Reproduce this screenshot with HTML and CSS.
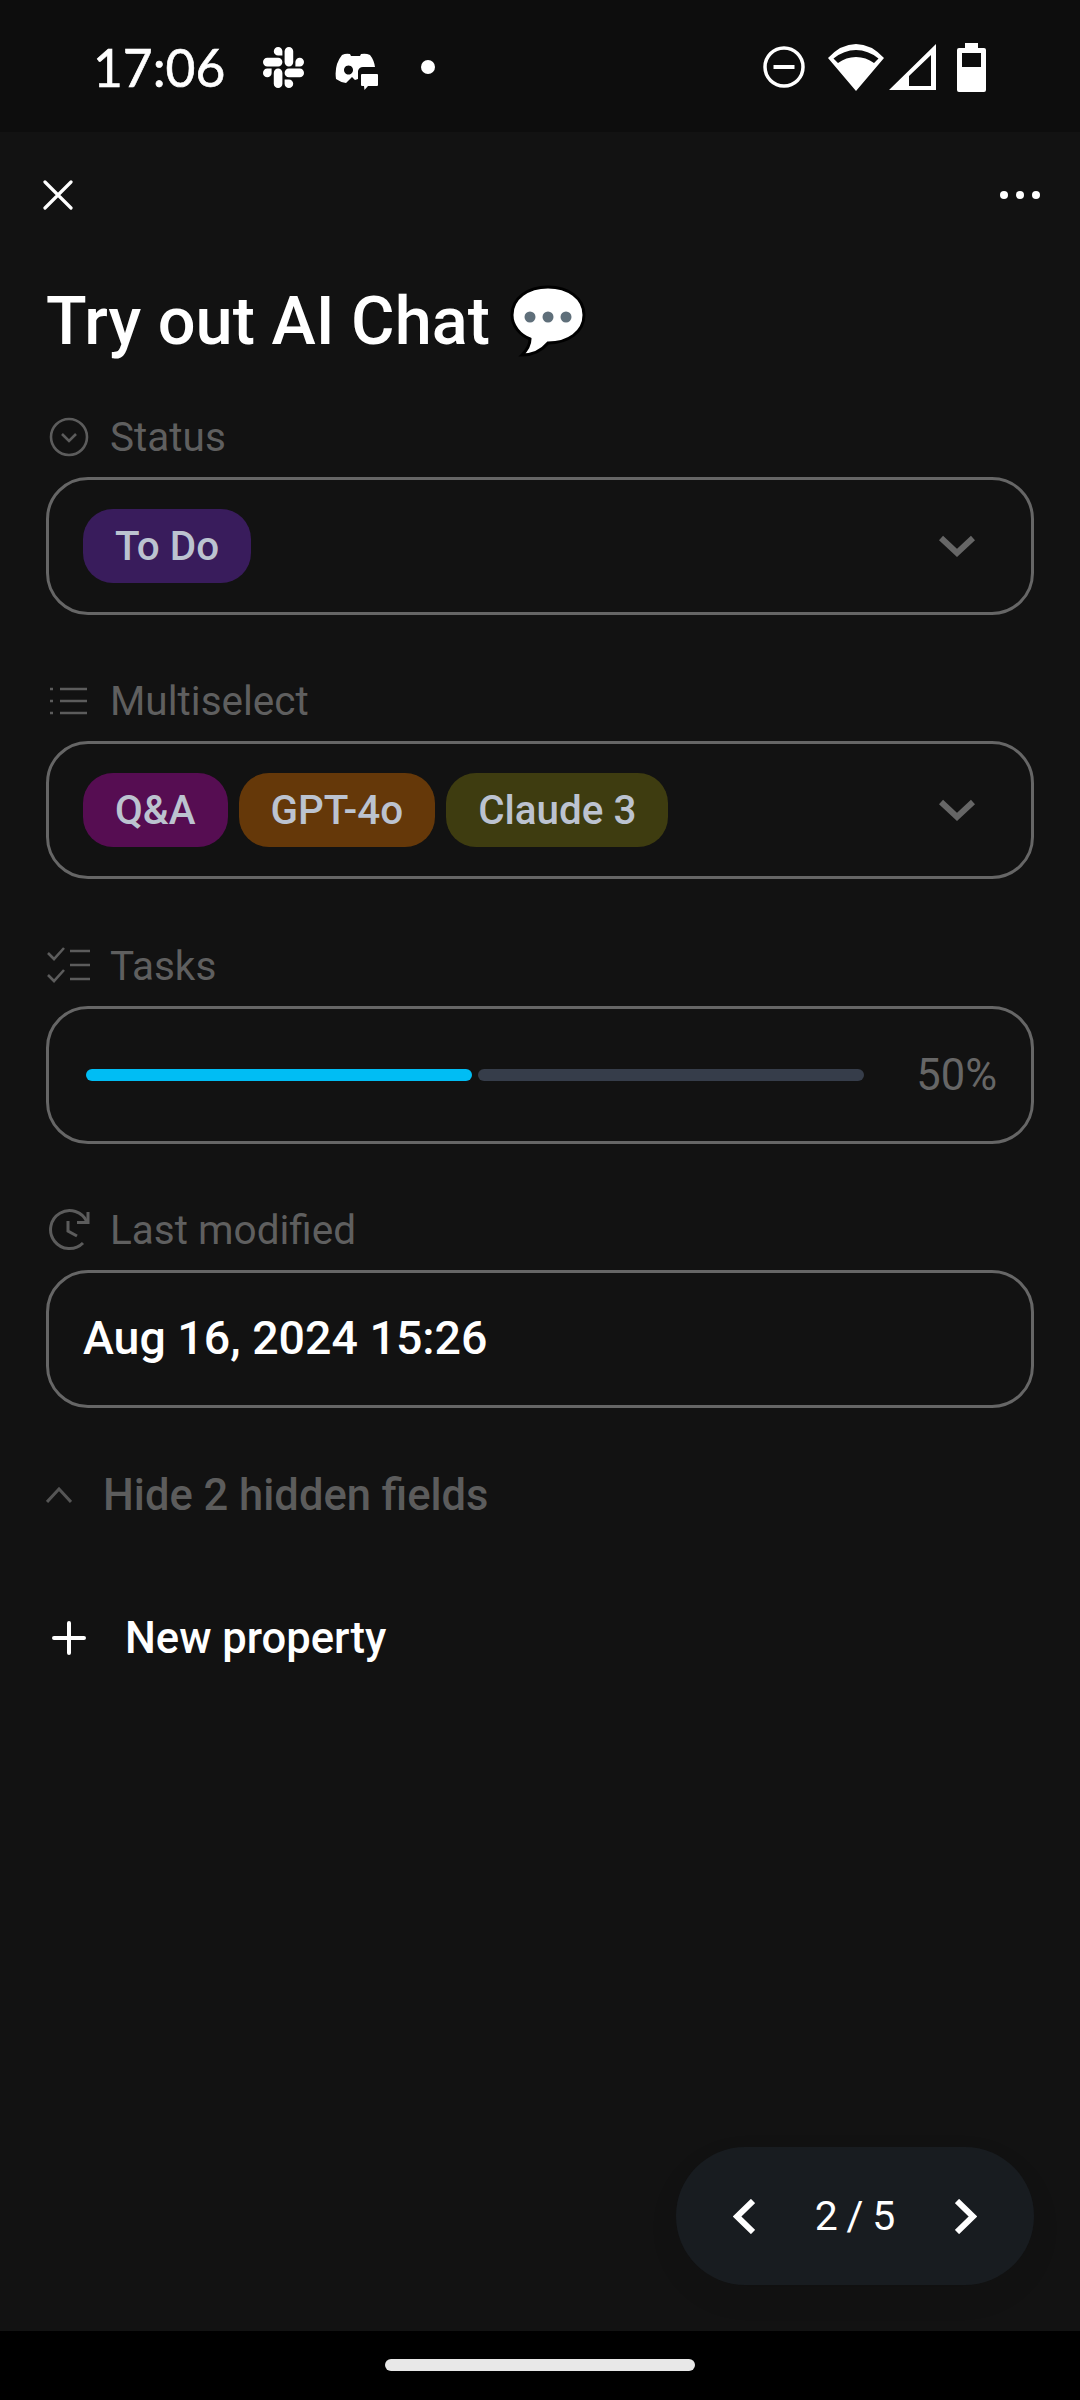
FILE: index.html
```html
<!DOCTYPE html>
<html lang="en">
  <head>
    <meta charset="UTF-8" />
    <meta name="viewport" content="width=device-width, initial-scale=1.0" />
    <title>Try out AI Chat</title>
    <link rel="stylesheet" href="styles.css">
  </head>
  <body>
    <header class="statusbar">
      <div class="status-left">
        <span class="clock">17:06</span>
        <svg class="ic-slack" viewBox="0 0 24 24" fill="#fff"><path d="M5.042 15.165a2.528 2.528 0 0 1-2.52 2.523A2.528 2.528 0 0 1 0 15.165a2.527 2.527 0 0 1 2.522-2.52h2.52v2.52zM6.313 15.165a2.527 2.527 0 0 1 2.521-2.52 2.527 2.527 0 0 1 2.521 2.52v6.313A2.528 2.528 0 0 1 8.834 24a2.528 2.528 0 0 1-2.521-2.522v-6.313zM8.834 5.042a2.528 2.528 0 0 1-2.521-2.52A2.528 2.528 0 0 1 8.834 0a2.528 2.528 0 0 1 2.521 2.522v2.52H8.834zM8.834 6.313a2.528 2.528 0 0 1 2.521 2.521 2.528 2.528 0 0 1-2.521 2.521H2.522A2.528 2.528 0 0 1 0 8.834a2.528 2.528 0 0 1 2.522-2.521h6.312zM18.956 8.834a2.528 2.528 0 0 1 2.522-2.521A2.528 2.528 0 0 1 24 8.834a2.528 2.528 0 0 1-2.522 2.521h-2.522V8.834zM17.688 8.834a2.528 2.528 0 0 1-2.523 2.521 2.527 2.527 0 0 1-2.52-2.521V2.522A2.527 2.527 0 0 1 15.165 0a2.528 2.528 0 0 1 2.523 2.522v6.312zM15.165 18.956a2.528 2.528 0 0 1 2.523 2.522A2.528 2.528 0 0 1 15.165 24a2.527 2.527 0 0 1-2.52-2.522v-2.522h2.52zM15.165 17.688a2.527 2.527 0 0 1-2.52-2.523 2.526 2.526 0 0 1 2.52-2.52h6.313A2.527 2.527 0 0 1 24 15.165a2.528 2.528 0 0 1-2.522 2.523h-6.313z"/></svg>
        <svg class="ic-discord" viewBox="0 0 44 37" fill="#fff">
          <path fill-rule="evenodd" d="M7 2Q11 0 15 1L16 3H25L26 1Q31 0 35 2Q39 7 40 14H28Q24 14 23 18V26L20 27L17 24L11 30Q5 29 1 26Q-1 12 7 2ZM13.5 12.5a4.5 4.5 0 1 0 .01 0Z"/>
          <path d="M27 21H42Q43 21 43 22V32Q43 33 42 33H33L29.5 37L29 33H27Q26 33 26 32V22Q26 21 27 21Z"/>
        </svg>
        <span class="notif-dot"></span>
      </div>
      <div class="status-right">
        <svg class="ic-dnd" viewBox="0 0 42 42" fill="none" stroke="#fff"><circle cx="21" cy="21" r="19" stroke-width="3.5"/><path d="M10.5 21H31.5" stroke-width="4"/></svg>
        <svg class="ic-wifi" viewBox="0 0 56 47" fill="#fff"><path fill-rule="evenodd" d="M28 47L0 14Q13 0 28 0Q43 0 56 14ZM5.5 14.5L10 19Q18 13 28 13Q38 13 46 19L50.5 14.5Q40 6 28 6Q16 6 5.5 14.5Z"/></svg>
        <svg class="ic-signal" viewBox="0 0 47 46" fill="#fff"><path fill-rule="evenodd" d="M47 0V46H0ZM42 11L20 32V42H42Z"/></svg>
        <svg class="ic-battery" viewBox="0 0 29 49" fill="#fff"><path fill-rule="evenodd" d="M8 0H21V5H27Q29 5 29 7V47Q29 49 27 49H2Q0 49 0 47V7Q0 5 2 5H8ZM5 10V24H24V10Z"/></svg>
      </div>
    </header>

    <main class="page">
      <div class="toolbar">
        <svg class="ic-close" viewBox="0 0 30 30" fill="none" stroke="#fff" stroke-width="3.2" stroke-linecap="round"><path d="M2 2L28 28M28 2L2 28"/></svg>
        <div class="more"><span></span><span></span><span></span></div>
      </div>

      <h1 class="title">
        Try out AI Chat
        <svg class="ic-balloon" viewBox="0 0 76 72"><path d="M38 2C18 2 2 13 2 30C2 41 10 50 20 54C20 60 17 65 12 70C24 70 33 64 38 58C58 58 74 47 74 30C74 13 58 2 38 2Z" fill="#fff" stroke="#000" stroke-width="3"/><circle cx="20" cy="32" r="5.5" fill="#5f6f7a"/><circle cx="38" cy="32" r="5.5" fill="#5f6f7a"/><circle cx="56" cy="32" r="5.5" fill="#5f6f7a"/></svg>
      </h1>

      <section class="field">
        <div class="field-label">
          <span class="label-icon"><svg viewBox="0 0 40 40" width="40" height="40" fill="none" stroke="#5c5c5c" stroke-width="2.6"><circle cx="20" cy="20" r="18"/><path d="M13 17L20 24L27 17"/></svg></span>
          Status
        </div>
        <div class="box">
          <span class="chip chip-purple">To Do</span>
          <svg class="ic-caret" viewBox="0 0 36 23" fill="none" stroke="#666" stroke-width="6"><path d="M2 3L18 18L34 3"/></svg>
        </div>
      </section>

      <section class="field">
        <div class="field-label">
          <span class="label-icon"><svg viewBox="0 0 40 40" width="40" height="40" fill="none" stroke="#5c5c5c" stroke-width="2.6"><path d="M11 8H38M11 20H38M11 32H38"/><path d="M1 8H4M1 20H4M1 32H4"/></svg></span>
          Multiselect
        </div>
        <div class="box">
          <span class="chip chip-magenta">Q&amp;A</span>
          <span class="chip chip-orange">GPT-4o</span>
          <span class="chip chip-olive">Claude 3</span>
          <svg class="ic-caret" viewBox="0 0 36 23" fill="none" stroke="#666" stroke-width="6"><path d="M2 3L18 18L34 3"/></svg>
        </div>
      </section>

      <section class="field">
        <div class="field-label">
          <span class="label-icon"><svg viewBox="0 0 44 40" width="44" height="40" fill="none" stroke="#5c5c5c" stroke-width="2.6"><path d="M23 5H43M23 19H43M23 33H43"/><path d="M1 7L7 13L17 2M1 29L7 35L17 24"/></svg></span>
          Tasks
        </div>
        <div class="box">
          <div class="progress">
            <span class="bar bar-done"></span>
            <span class="bar bar-rest"></span>
          </div>
          <span class="percent">50%</span>
        </div>
      </section>

      <section class="field">
        <div class="field-label">
          <span class="label-icon"><svg viewBox="0 0 44 44" width="44" height="44" fill="none" stroke="#5c5c5c" stroke-width="3"><path d="M40 14A19 19 0 1 0 36 35"/><path d="M41 4V14.500H30"/><path d="M21 13V23L30 28"/></svg></span>
          Last modified
        </div>
        <div class="box">
          <span class="date">Aug 16, 2024 15:26</span>
        </div>
      </section>

      <div class="hide-row">
        <svg class="ic-up" viewBox="0 0 26 16" fill="none" stroke="#555" stroke-width="3"><path d="M1 15L13 2L25 15"/></svg>
        Hide 2 hidden fields
      </div>

      <div class="new-row">
        <svg class="ic-plus" viewBox="0 0 34 34" fill="none" stroke="#fff" stroke-width="4" stroke-linecap="round"><path d="M17 2V32M2 17H32"/></svg>
        New property
      </div>

      <div class="pager">
        <svg class="ic-nav" viewBox="0 0 22 35" fill="none" stroke="#fff" stroke-width="6"><path d="M20 2L4 17.500L20 33"/></svg>
        <span class="pager-text">2 / 5</span>
        <svg class="ic-nav" viewBox="0 0 22 35" fill="none" stroke="#fff" stroke-width="6"><path d="M2 2L18 17.500L2 33"/></svg>
      </div>
    </main>

    <footer class="navbar">
      <span class="handle"></span>
    </footer>
  </body>
</html>
```

FILE: styles.css
```css
* {
  box-sizing: border-box;
}
body {
  margin: 0;
  width: 1080px;
  height: 2400px;
  display: flex;
  flex-direction: column;
  overflow: hidden;
  background-color: #121212;
  font-family: Roboto, "Liberation Sans", sans-serif;
  color: #fff;
}
svg {
  display: block;
  flex-shrink: 0;
}

/* status bar */
.statusbar {
  height: 132px;
  flex-shrink: 0;
  background-color: #0d0d0d;
  display: flex;
  justify-content: space-between;
  align-items: center;
  padding: 2px 94px 0 93px;
}
.status-left,
.status-right {
  display: flex;
  align-items: center;
}
.clock {
  font-family: Lato, sans-serif;
  font-size: 51.5px;
  line-height: 60px;
  width: 170px;
  white-space: nowrap;
  -webkit-text-stroke: 0.6px #fff;
}
.ic-slack {
  width: 41px;
  height: 41px;
  margin-right: 31px;
}
.ic-discord {
  width: 44px;
  height: 37px;
  margin-right: 42px;
  margin-top: 8px;
}
.notif-dot {
  width: 14px;
  height: 14px;
  border-radius: 50%;
  background-color: #fff;
}
.ic-dnd {
  width: 42px;
  height: 42px;
  margin-right: 23px;
}
.ic-wifi {
  width: 56px;
  height: 47px;
  margin-right: 5px;
}
.ic-signal {
  width: 47px;
  height: 46px;
  margin-right: 21px;
}
.ic-battery {
  width: 29px;
  height: 49px;
}

/* page */
.page {
  position: relative;
  flex: 1;
  padding: 0 46px;
}
.toolbar {
  height: 126px;
  display: flex;
  justify-content: space-between;
  align-items: center;
}
.ic-close {
  width: 30px;
  height: 30px;
  margin-left: -3px;
}
.more {
  display: flex;
  gap: 8px;
  margin-right: -6px;
}
.more span {
  width: 8px;
  height: 8px;
  border-radius: 50%;
  background-color: #fff;
}
.title {
  margin: 0;
  height: 157px;
  padding-top: 24px;
  display: flex;
  align-items: flex-start;
  gap: 20px;
  font-size: 66.7px;
  font-weight: 500;
  line-height: 78px;
}
.ic-balloon {
  width: 76px;
  height: 72px;
  margin-top: 3px;
}

/* property fields */
.field {
  margin-bottom: 64.33px;
}
.field-label {
  height: 44px;
  display: flex;
  align-items: center;
  gap: 18px;
  margin-bottom: 18px;
  font-size: 40.5px;
  color: #5f5f5f;
}
.label-icon {
  width: 46px;
  display: flex;
  justify-content: center;
}
.box {
  height: 138px;
  display: flex;
  align-items: center;
  gap: 11px;
  padding: 0 34px;
  border: 3px solid #666;
  border-radius: 42px;
}
.chip {
  height: 74px;
  padding: 1px 32px 0;
  display: flex;
  align-items: center;
  border-radius: 30px;
  font-size: 40.4px;
  font-weight: 500;
  color: #bcc3d0;
}
.chip-purple {
  background-color: #391c5c;
}
.chip-magenta {
  background-color: #560d52;
}
.chip-orange {
  background-color: #653809;
}
.chip-olive {
  background-color: #3e3c10;
}
.ic-caret {
  width: 36px;
  height: 23px;
  margin-left: auto;
  margin-right: 22px;
}
.progress {
  width: 778px;
  margin-left: 3px;
  display: flex;
  gap: 6px;
}
.bar {
  flex: 1;
  height: 12px;
  border-radius: 6px;
}
.bar-done {
  background-color: #00bdf4;
}
.bar-rest {
  background-color: #363d4a;
}
.percent {
  margin-left: auto;
  padding-top: 2px;
  font-size: 43.5px;
  color: #666;
}
.date {
  padding-bottom: 2px;
  font-size: 46.5px;
  font-weight: 500;
}

/* rows under the fields */
.hide-row,
.new-row {
  height: 60px;
  display: flex;
  align-items: center;
  font-size: 43.5px;
  font-weight: 500;
}
.hide-row {
  margin-top: -7px;
  color: #5c5c5c;
}
.ic-up {
  width: 26px;
  height: 16px;
  margin-right: 31px;
}
.new-row {
  margin-top: 83px;
}
.ic-plus {
  width: 34px;
  height: 34px;
  margin-left: 6px;
  margin-right: 39px;
}

/* floating pager */
.pager {
  position: absolute;
  right: 46px;
  bottom: 46px;
  width: 358px;
  height: 138px;
  padding: 0 57px;
  display: flex;
  justify-content: space-between;
  align-items: center;
  border-radius: 69px;
  background-color: #181c20;
  box-shadow: 0 12px 30px rgba(0, 0, 0, 0.08);
}
.ic-nav {
  width: 22px;
  height: 35px;
}
.pager-text {
  font-size: 41px;
  word-spacing: -1.5px;
}

/* gesture bar */
.navbar {
  height: 69px;
  flex-shrink: 0;
  background-color: #000;
  display: flex;
  justify-content: center;
  padding-top: 28px;
}
.handle {
  width: 310px;
  height: 12px;
  border-radius: 6px;
  background-color: #e8e8e8;
}
```
